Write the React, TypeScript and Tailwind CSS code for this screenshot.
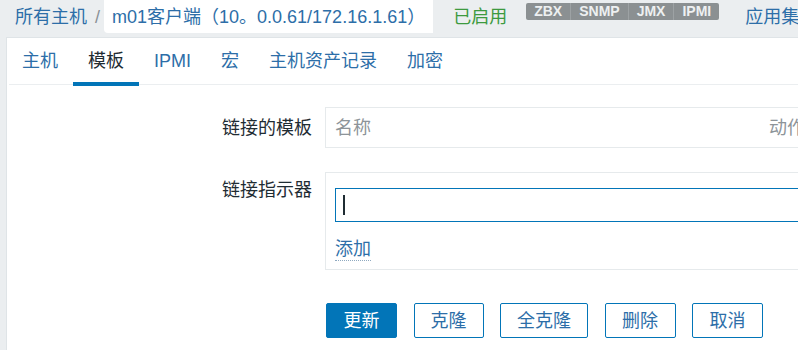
const tabs = ['主机', '模板', 'IPMI', '宏', '主机资产记录', '加密'];
const badges = ['ZBX', 'SNMP', 'JMX', 'IPMI'];
const buttons = [
  { label: '更新', width: 'w-[71px]', primary: true },
  { label: '克隆', width: 'w-[70px]', primary: false },
  { label: '全克隆', width: 'w-[88px]', primary: false },
  { label: '删除', width: 'w-[71px]', primary: false },
  { label: '取消', width: 'w-[71px]', primary: false },
];

export default function App() {
  return (
    <div className="w-[798px] h-[350px] overflow-hidden bg-[#ebeef0] flex flex-col font-['Liberation_Sans','Noto_Sans_CJK_SC',sans-serif] text-[18px] leading-[24px] text-[#1f2c33]">
      {/* breadcrumbs */}
      <div className="h-[37px] flex items-start shrink-0 whitespace-nowrap">
        <div className="h-[33px] flex items-center pl-[15px] text-[#2d6ea8]">所有主机</div>
        <div className="h-[33px] flex items-center pl-[8px] pr-[4px] text-[#8a9196]">/</div>
        <div className="h-[33px] flex items-center bg-white rounded-bl-[4px] pl-[8px] pr-[8px] text-[#2d6ea8]">
          m01客户端（10。0.0.61/172.16.1.61）
        </div>
        <div className="h-[33px] flex items-center ml-[20px] text-[#3d9a3f]">已启用</div>
        <div className="h-[33px] flex items-start pt-[3px] ml-[19px]">
          <div className="flex rounded-[2px] overflow-hidden">
            {badges.map((b) => (
              <span
                key={b}
                className="h-[17px] px-[8px] leading-[17px] text-[14px] font-bold text-[#eef0f1] bg-[#8b9092] border-l border-[#9da2a4] first:border-l-0"
              >
                {b}
              </span>
            ))}
          </div>
        </div>
        <div className="h-[33px] flex items-center ml-[26px] text-[#2d6ea8]">应用集</div>
      </div>

      {/* main card */}
      <div className="flex-1 ml-[6px] bg-white border-l border-t border-[#dfe4e7]">
        <div className="flex h-[47px] border-b border-[#ebeef0] ml-[2px]">
          {tabs.map((t, i) => (
            <div
              key={t}
              className={
                i === 1
                  ? 'h-[48px] px-[15px] pt-[1px] flex items-center border-b-4 border-[#0275b8] text-[#1f2c33]'
                  : 'h-[48px] px-[15px] pt-[1px] flex items-center border-b-4 border-transparent text-[#2d6ea8] first:-ml-[2px]'
              }
            >
              {t}
            </div>
          ))}
        </div>

        <div className="mt-[22px] flex flex-col">
          {/* linked templates */}
          <div className="flex items-center gap-[13px]">
            <div className="w-[305px] shrink-0 text-right whitespace-nowrap">链接的模板</div>
            <div className="w-[600px] h-[41px] border border-[#e6eaec] flex items-center px-[9px] text-[#8d9499] shrink-0">
              <span className="w-[434px] shrink-0">名称</span>
              <span>动作</span>
            </div>
          </div>

          {/* link indicator */}
          <div className="flex items-start gap-[13px] mt-[24px]">
            <div className="w-[305px] shrink-0 text-right pt-[6px] whitespace-nowrap">链接指示器</div>
            <div className="w-[600px] h-[98px] border border-[#e6eaec] pl-[9px] pt-[15px] shrink-0">
              <div className="w-[560px] h-[34px] border border-[#0275b8] flex items-center pl-[7px]">
                <span className="w-[2px] h-[20px] bg-[#1f2c33]" />
              </div>
              <div className="mt-[16px] inline-block text-[#2d6ea8] border-b border-dotted border-[#8fa9c0] leading-[22px]">
                添加
              </div>
            </div>
          </div>

          {/* buttons */}
          <div className="flex gap-[16.5px] mt-[33px] ml-[319px]">
            {buttons.map((b) => (
              <button
                key={b.label}
                className={
                  b.primary
                    ? `${b.width} h-[35px] rounded-[2px] bg-[#0275b8] border border-[#0275b8] text-white flex items-center justify-center`
                    : `${b.width} h-[35px] rounded-[2px] bg-white border border-[#0275b8] text-[#2d6ea8] flex items-center justify-center`
                }
              >
                {b.label}
              </button>
            ))}
          </div>
        </div>
      </div>
    </div>
  );
}
